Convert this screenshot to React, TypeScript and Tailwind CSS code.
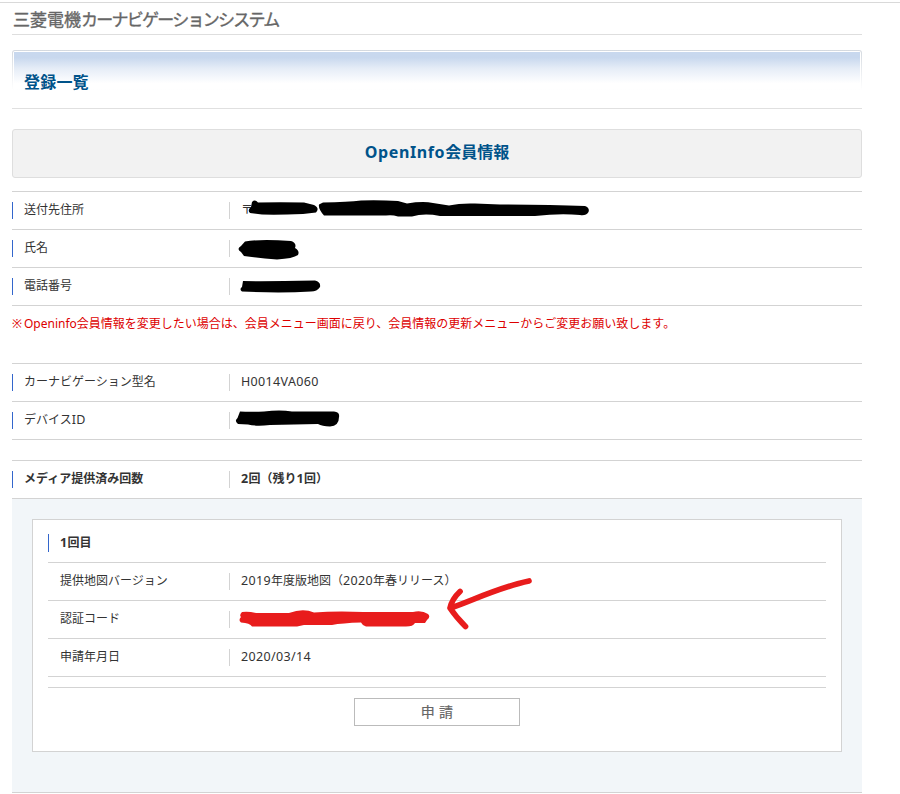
import type { ReactNode } from "react";
import clsx from "clsx";

type RowProps = {
  label: ReactNode;
  children?: ReactNode;
  marker?: boolean;
  bold?: boolean;
  nested?: boolean;
};

// Latin letters and digits run slightly wider than the surrounding kana.
function Latin({ children }: { children: ReactNode }) {
  return <span className="text-[12.5px] tracking-[0.35px]">{children}</span>;
}

function Row({ label, children, marker, bold, nested }: RowProps) {
  return (
    <div className={clsx("flex h-[38px] items-center border-b border-[#d3d3d3]", bold && "font-bold")}>
      <dt
        className={clsx(
          "flex h-[17px] items-center pl-[11px]",
          nested ? "w-[181px]" : "w-[217px]",
          marker ? "border-l border-[#3366cc]" : "border-l border-transparent",
        )}
      >
        <span className="relative -top-px whitespace-nowrap">{label}</span>
      </dt>
      <dd className="flex h-[17px] items-center border-l border-[#d3d3d3] pl-[11px]">
        <span className="relative -top-px whitespace-nowrap">{children}</span>
      </dd>
    </div>
  );
}

// Hand-drawn strokes hiding the personal data, plus the arrow.
function Markup() {
  return (
    <svg width="900" height="794" viewBox="0 0 900 794" className="pointer-events-none absolute left-0 top-0" aria-hidden>
      <g fill="#000">
        <path d="M252 202Q255 199 258 202.500Q280 202 304 202.500L314 205Q320 208 316 212.500L303 214Q278 215 262 214.500L250 213Q247 210 251 207Z" />
        <path d="M323 202.500Q348 202 361 200.500Q380 200 398 201L407 203.500Q423 201 433 203L449 205.500Q460 203 475 203.500L500 204.500Q550 204.500 585 206Q590 208 588.500 212Q586 216 580 215Q560 213 535 216H440Q424 213 412 216.500H398Q392 214.500 386 215.500H324Q318 209 319 204.500Z" />
        <path d="M245 241.500Q260 239 291 241Q297 243 295 248Q300 251 298 255Q293 258.500 277 259.500Q258 258 244 256L241 252Q236 249 241 246Z" />
        <path d="M243 281Q265 281.500 315 280.500Q321 282 320 287Q317 291.500 311 291.500Q280 293.500 242 291.500Q239 289 242 287Z" />
        <path d="M240 411.500Q250 412 264 411.500Q280 409.500 292 411.500L334 411.500Q340 412 339 417Q339 426 330 426.500Q322 426 318 424L270 425Q256 426.500 248 424.500L238 424Q234 421 237.500 418Z" />
      </g>
      <path
        d="M242 612Q248 611 256 613H289Q303 608 314 612.500Q335 611 363 612H397L413 612Q422 610 428 614Q431 617 427 620L425 623L415 623Q413 627 404 626.500H366Q362 625 361 622.500Q342 623 332 625Q315 625 304 625L297 626.500H252Q250 623 241 622.500Q238 620 241 617Q239 615 242 612Z"
        fill="#e81c1c"
      />
      <path
        d="M529 581C500 587 476 599 451 608M460 591.500Q452 599 450 608Q456 617 465.500 626.500"
        fill="none"
        stroke="#e81c1c"
        strokeWidth="5.700"
        strokeLinecap="round"
        strokeLinejoin="round"
      />
    </svg>
  );
}

export default function App() {
  return (
    <div className="relative h-[794px] w-[900px] overflow-hidden bg-white pt-[2px] font-['Noto_Sans','Noto_Sans_CJK_JP',sans-serif] text-[12px] leading-[18px] text-[#333]">
      <header className="border-t border-[#d9d9d9] pl-3">
        <h1 className="h-8 w-[850px] whitespace-nowrap border-b border-[#dedede] pl-px text-[17px] leading-[33px] text-[#666] [-webkit-text-stroke:0.35px_#666]">
          三菱電機<span className="tracking-[-1.750px]">カーナビゲーションシステム</span>
        </h1>
      </header>

      <main className="ml-3 w-[850px]">
        <div className="mt-[15px] h-[59px] border-b border-[#e0e0e0]">
          <div className="h-[40px] rounded-t-[3px] bg-linear-to-b from-[#d4d9df] to-white p-px">
            <div className="h-full rounded-t-[2px] bg-white px-px pt-px">
              <h2 className="h-full bg-linear-to-b from-[#c8d8ee] from-15% via-[#e6edf7] via-45% to-white to-85% pl-[10px] text-[16px] font-bold leading-[60px] tracking-[0.2px] text-[#00538a]">
                登録一覧
              </h2>
            </div>
          </div>
        </div>

        <h3 className="mt-5 h-[49px] rounded-[3px] border border-[#dedede] bg-[#f2f2f2] text-center text-[16px] font-bold leading-[44px] text-[#00538a]">
          <span className="tracking-[0.6px]">OpenInfo</span>会員情報
        </h3>

        <dl className="mt-[13px] border-t border-[#d3d3d3]">
          <Row label="送付先住所" marker>〒</Row>
          <Row label="氏名" marker />
          <Row label="電話番号" marker />
        </dl>
        <p className="mt-[9px] h-[18px] whitespace-nowrap text-[#dd0000]">
          <span className="inline-block w-3">※</span>Openinfo会員情報を変更したい場合は、会員メニュー画面に戻り、会員情報の更新メニューからご変更お願い致します。
        </p>

        <dl className="mt-[30px] border-t border-[#d3d3d3]">
          <Row label="カーナビゲーション型名" marker><Latin>H0014VA060</Latin></Row>
          <Row label={<>デバイス<Latin>ID</Latin></>} marker />
        </dl>

        <dl className="mt-5 border-t border-[#d3d3d3]">
          <Row label="メディア提供済み回数" marker bold>
            <Latin>2</Latin>回（残り<Latin>1</Latin>回）
          </Row>
        </dl>

        <section className="h-[294px] border-b border-[#d3d3d3] bg-[#f2f6f9] px-5 pt-5">
          <div className="h-[233px] border border-[#d3d3d3] bg-white px-[15px] pt-[14px]">
            <h4 className="h-[29px] border-b border-[#d3d3d3] font-bold">
              <span className="flex h-[18px] items-center border-l border-[#3366cc] pl-[11px]">
                <Latin>1</Latin>回目
              </span>
            </h4>
            <dl>
              <Row label="提供地図バージョン" nested>
                <Latin>2019</Latin>年度版地図（<Latin>2020</Latin>年春リリース）
              </Row>
              <Row label="認証コード" nested />
              <Row label="申請年月日" nested><Latin>2020/03/14</Latin></Row>
            </dl>
            <div className="mt-[10px] flex justify-center border-t border-[#d3d3d3] pt-[10px]">
              <button type="button" className="h-7 w-[166px] border border-[#bbb] bg-white text-[14px] leading-none tracking-[0.3px] text-[#666] [-webkit-text-stroke:0.2px_#666]">
                申 請
              </button>
            </div>
          </div>
        </section>
      </main>
      <Markup />
    </div>
  );
}
